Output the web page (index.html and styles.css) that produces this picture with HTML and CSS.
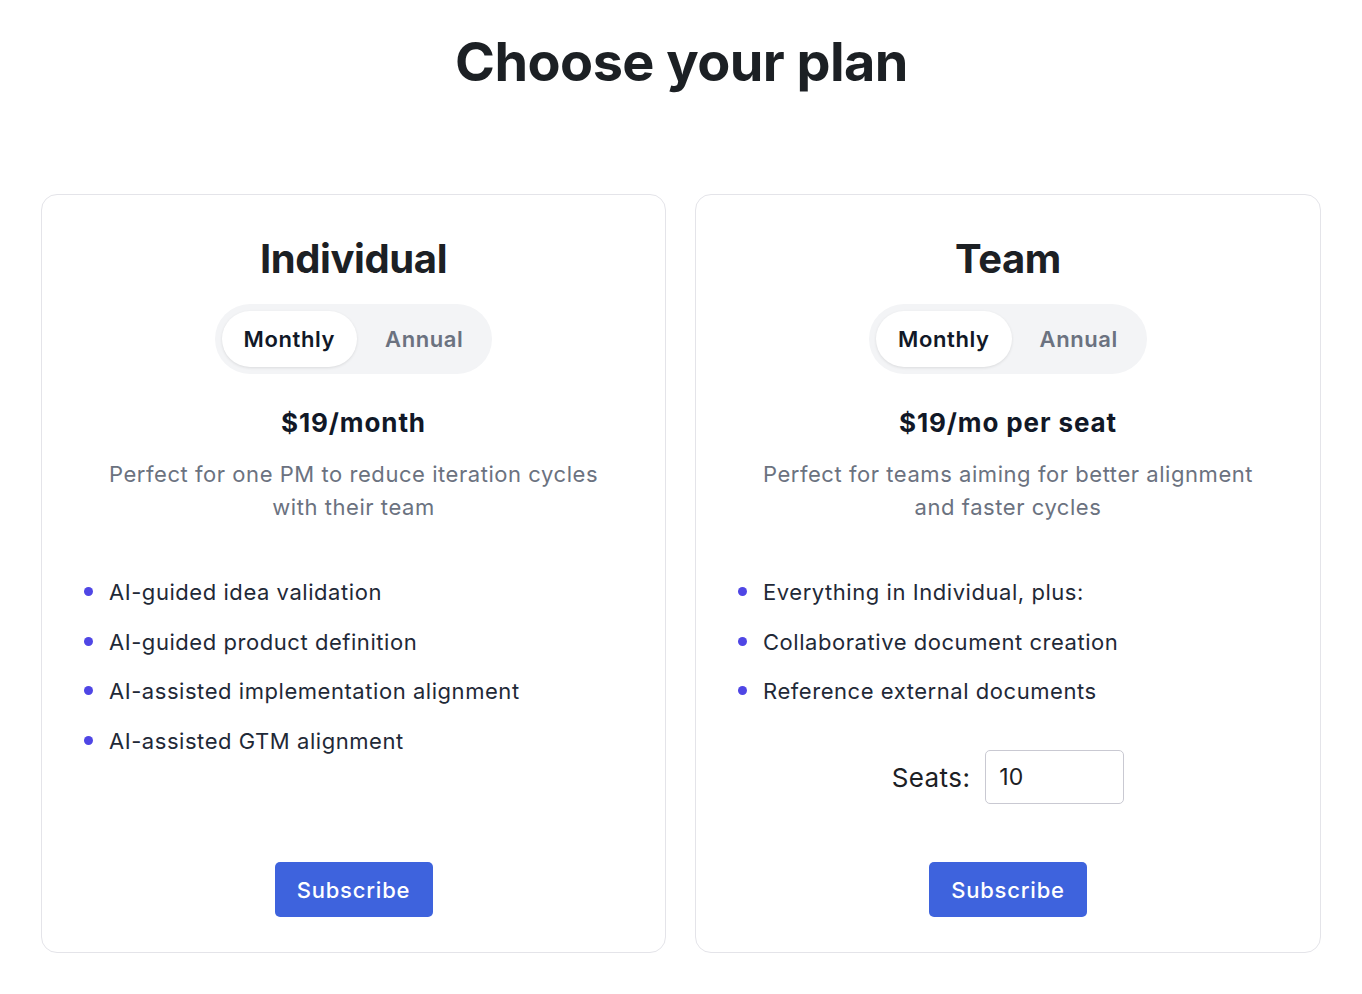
FILE: index.html
```html
<!DOCTYPE html>
<html lang="en">
<head>
    <meta charset="UTF-8">
    <meta name="viewport" content="width=device-width, initial-scale=1.0">
    <title>Choose your plan</title>
    <link rel="stylesheet" href="styles.css">
</head>
<body>
    <div id="main">
        <h1 class="page-title">Choose your plan</h1>
        <div class="plans">
            <div class="card">
                <h2 class="plan-name">Individual</h2>
                <div class="toggle">
                    <button class="toggle-btn active">Monthly</button>
                    <button class="toggle-btn">Annual</button>
                </div>
                <div class="price">$19/month</div>
                <p class="desc">Perfect for one PM to reduce iteration cycles with their team</p>
                <ul class="features">
                    <li><span class="dot"></span>AI-guided idea validation</li>
                    <li><span class="dot"></span>AI-guided product definition</li>
                    <li><span class="dot"></span>AI-assisted implementation alignment</li>
                    <li><span class="dot"></span>AI-assisted GTM alignment</li>
                </ul>
                <button class="subscribe">Subscribe</button>
            </div>
            <div class="card">
                <h2 class="plan-name">Team</h2>
                <div class="toggle">
                    <button class="toggle-btn active">Monthly</button>
                    <button class="toggle-btn">Annual</button>
                </div>
                <div class="price">$19/mo per seat</div>
                <p class="desc">Perfect for teams aiming for better alignment and faster cycles</p>
                <ul class="features">
                    <li><span class="dot"></span>Everything in Individual, plus:</li>
                    <li><span class="dot"></span>Collaborative document creation</li>
                    <li><span class="dot"></span>Reference external documents</li>
                </ul>
                <div class="seats">
                    <label for="seats">Seats:</label>
                    <input type="number" id="seats" class="seats-input" value="10">
                </div>
                <button class="subscribe">Subscribe</button>
            </div>
        </div>
    </div>
</body>
</html>
```

FILE: styles.css
```css
* {
    box-sizing: border-box;
}
body {
    margin: 0;
    background: #ffffff;
    font-family: Inter, "Noto Sans", sans-serif;
    color: #1c2024;
}
#main {
    padding: 31px 40px 40px 41px;
}
.page-title {
    margin: 0;
    text-align: center;
    font-size: 54px;
    line-height: 62px;
    font-weight: 700;
    letter-spacing: -0.55px;
    color: #1c2024;
}
.plans {
    margin-top: 101px;
    display: grid;
    grid-template-columns: 625px 626px;
    gap: 29px;
}
.card {
    display: flex;
    flex-direction: column;
    align-items: center;
    height: 759px;
    padding: 40px 40px 35px;
    border: 1px solid #e4e4e9;
    border-radius: 16px;
}
.plan-name {
    margin: 0;
    font-size: 40px;
    line-height: 48px;
    font-weight: 700;
    letter-spacing: -0.4px;
    color: #1c2024;
}
.toggle {
    margin-top: 21px;
    display: flex;
    gap: 6px;
    padding: 7px;
    background: #f3f4f6;
    border-radius: 35px;
}
.toggle-btn {
    height: 56px;
    padding: 0 22px;
    border: none;
    border-radius: 28px;
    background: transparent;
    font-family: inherit;
    font-size: 22px;
    font-weight: 600;
    letter-spacing: 0.6px;
    color: #6b7280;
}
.toggle-btn.active {
    background: #ffffff;
    color: #111827;
    box-shadow: 0 1px 3px rgba(0, 0, 0, 0.1);
}
.price {
    margin-top: 33px;
    font-size: 26px;
    line-height: 32px;
    font-weight: 700;
    letter-spacing: 0.9px;
    color: #111827;
}
.desc {
    margin: 19px 0 0;
    max-width: 510px;
    text-align: center;
    font-size: 22px;
    line-height: 33px;
    letter-spacing: 0.55px;
    color: #6b7280;
}
.features {
    align-self: stretch;
    list-style: none;
    margin: 52px 0 0;
    padding: 0;
    display: flex;
    flex-direction: column;
    gap: 16.5px;
}
.features li {
    display: flex;
    align-items: center;
    font-size: 22px;
    line-height: 33px;
    letter-spacing: 0.55px;
    color: #1f2937;
}
.dot {
    width: 9px;
    height: 9px;
    margin: 11px 16px 0 2px;
    border-radius: 50%;
    background: #4f46e5;
    align-self: flex-start;
}
.seats {
    margin-top: 42px;
    display: flex;
    align-items: center;
    gap: 15px;
    font-size: 26px;
    letter-spacing: 0.4px;
}
.seats-input {
    width: 139px;
    height: 54px;
    padding: 0 13px;
    border: 1px solid #c9c9d2;
    border-radius: 5px;
    font-family: inherit;
    font-size: 23px;
    color: #1c2024;
    -moz-appearance: textfield;
}
.seats-input::-webkit-inner-spin-button,
.seats-input::-webkit-outer-spin-button {
    -webkit-appearance: none;
}
.subscribe {
    margin-top: auto;
    width: 158px;
    height: 55px;
    border: none;
    border-radius: 5px;
    background: #3e63dd;
    color: #ffffff;
    font-family: inherit;
    font-size: 22px;
    font-weight: 500;
    letter-spacing: 0.8px;
    cursor: pointer;
}
```
